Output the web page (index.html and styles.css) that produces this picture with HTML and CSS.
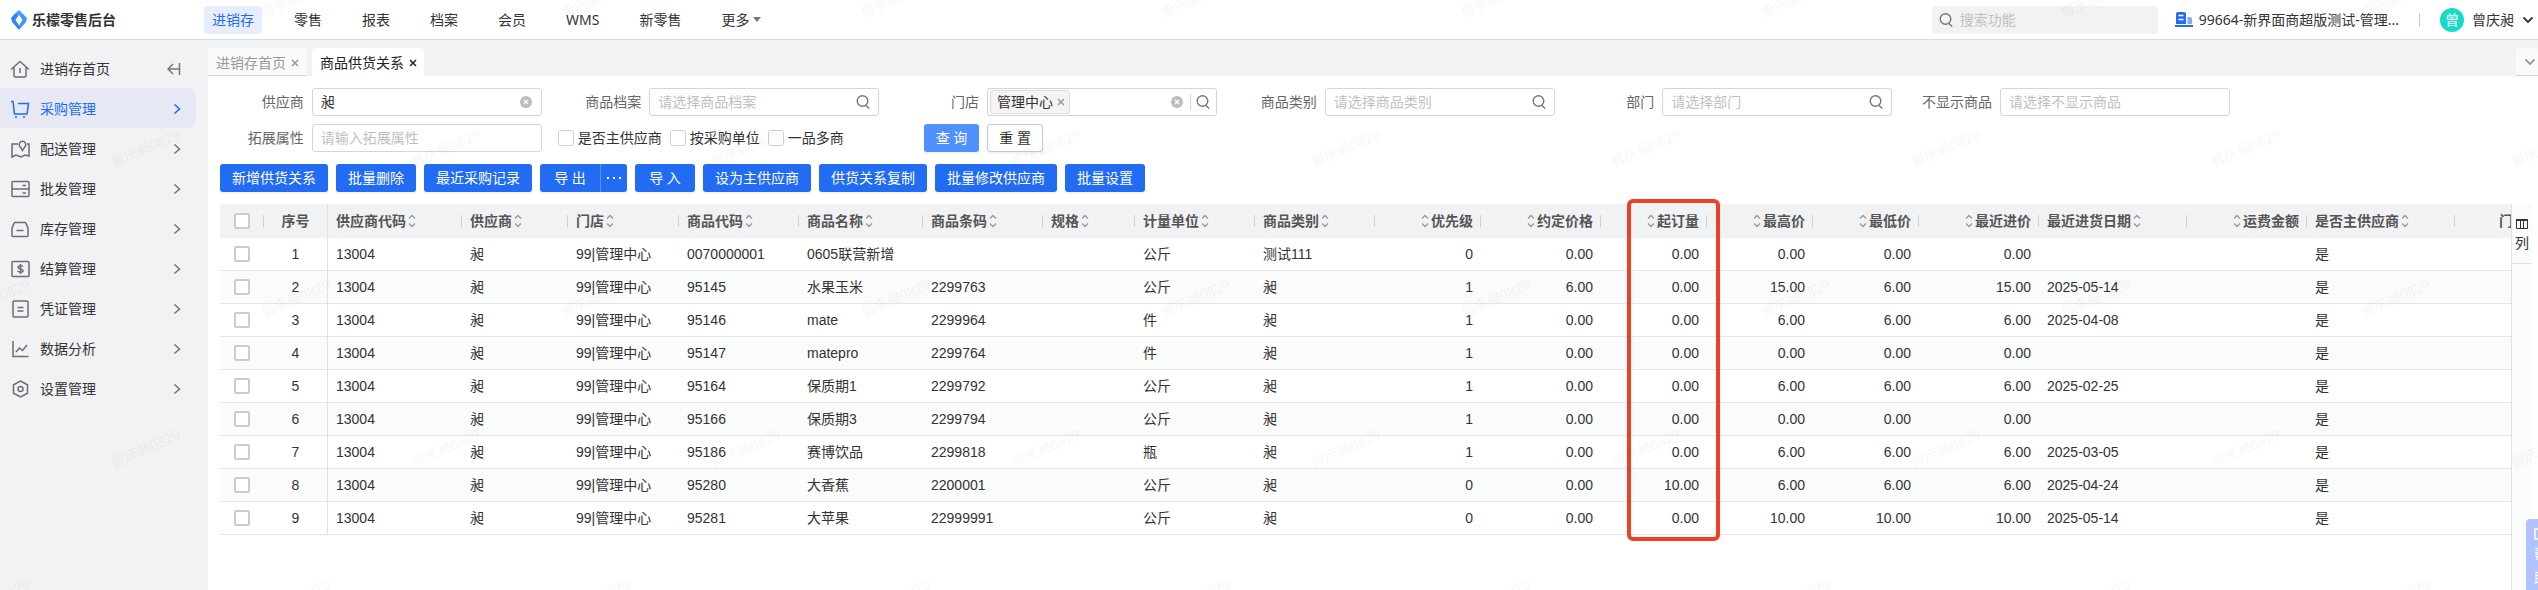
FILE: index.html
```
<!DOCTYPE html>
<html lang="zh-CN">
<head>
    <meta charset="UTF-8">
    <meta name="viewport" content="width=device-width, initial-scale=1.0">
    <title>乐檬零售后台</title>
    <link rel="stylesheet" href="styles.css">
</head>
<body>
    <!-- shared icons -->
    <svg class="sprite" width="0" height="0">
        <symbol id="sort" viewBox="0 0 8 14"><path d="M1 4.500 4 1.500l3 3M1 9.500l3 3 3-3" fill="none" stroke="#999" stroke-width="1.300"/></symbol>
        <symbol id="search" viewBox="0 0 16 16"><circle cx="7.500" cy="7" r="5.300" fill="none" stroke="#777" stroke-width="1.400"/><path d="m11 11.500 3.200 3" fill="none" stroke="#777" stroke-width="1.400"/></symbol>
        <symbol id="clear" viewBox="0 0 12 12"><circle cx="6" cy="6" r="6" fill="#bdbdbd"/><path d="m4 4 4 4m0-4-4 4" stroke="#fff" stroke-width="1.400"/></symbol>
        <symbol id="cross" viewBox="0 0 8 8"><path d="m1 1 6 6m0-6-6 6" fill="none" stroke="currentColor" stroke-width="1.500"/></symbol>
        <symbol id="right" viewBox="0 0 8 12"><path d="m1.500 1.500 5 4.500-5 4.500" fill="none" stroke="currentColor" stroke-width="1.600"/></symbol>
        <symbol id="down" viewBox="0 0 12 8"><path d="m1.500 1.500 4.500 4.500 4.500-4.500" fill="none" stroke="currentColor" stroke-width="1.800"/></symbol>
    </svg>

    <header class="header">
        <div class="logo">
            <svg width="16" height="20" viewBox="0 0 16 20">
                <path d="M8 0 3 4.500v3L8 4.500l2.500 3L13 5z" fill="#3aa0ff"/>
                <path d="M3 4.500 0 8l1 4 7 8v-4.500L4.500 10 8 4.500z" fill="#2f86f6"/>
                <path d="M13 5l3 3-1 4-7 8v-4.500l3.500-5.500L8 4.500z" fill="#3f97fb"/>
            </svg>
            <span>乐檬零售后台</span>
        </div>
        <nav class="nav">
            <a href="#" class="active">进销存</a>
            <a href="#">零售</a>
            <a href="#">报表</a>
            <a href="#">档案</a>
            <a href="#">会员</a>
            <a href="#">WMS</a>
            <a href="#">新零售</a>
            <a href="#">更多<i class="caret"></i></a>
        </nav>
        <div class="header-right">
            <label class="search-box">
                <svg width="16" height="16"><use href="#search"/></svg>
                <input type="text" placeholder="搜索功能" aria-label="搜索功能">
            </label>
            <a href="#" class="org">
                <svg width="18" height="15" viewBox="0 0 18 15">
                    <path d="M1 2a2 2 0 0 1 2-2h6a2 2 0 0 1 2 2v10H1zM0 13h18v2H0z" fill="#226cf3"/>
                    <path d="M3.500 3.500h5M3.500 7.500h5" stroke="#fff" stroke-width="1.500"/>
                    <path d="M12.500 5H15a2 2 0 0 1 2 2v5h-4.500z" fill="#7fa9f8"/>
                </svg>
                <span>99664-新界面商超版测试-管理...</span>
            </a>
            <span class="divider"></span>
            <button class="user">
                <span class="avatar">曾</span>
                <span>曾庆昶</span>
                <svg width="12" height="8"><use href="#down"/></svg>
            </button>
        </div>
    </header>

    <div class="layout">
        <aside class="sidebar">
            <a href="#" class="menu-item">
                <svg class="menu-icon" viewBox="0 0 20 20"><path d="M1 10.500 10 2.500l9 8M4 8.500V17a1 1 0 0 0 1 1h10a1 1 0 0 0 1-1V8.500M10 9v5"/></svg>
                <span>进销存首页</span>
                <svg class="collapse" width="14" height="12" viewBox="0 0 14 12"><path d="M6 1 1 6l5 5M1 6h11M12.500 0v12" fill="none" stroke="#777" stroke-width="1.500"/></svg>
            </a>
            <a href="#" class="menu-item active">
                <svg class="menu-icon" viewBox="0 0 20 20"><path d="M1 2.500h2L4.500 15H17l1.500-10.500H8"/><path d="M6 17v2M14 17v2"/></svg>
                <span>采购管理</span>
                <svg class="arrow"><use href="#right"/></svg>
            </a>
            <a href="#" class="menu-item">
                <svg class="menu-icon" viewBox="0 0 20 20"><path d="M8 5H2v13l4-2 5 2 4-2 4 1V5h-2"/><path d="M12.500 11.500 9.500 7a3.300 3.300 0 1 1 6 0z"/></svg>
                <span>配送管理</span>
                <svg class="arrow"><use href="#right"/></svg>
            </a>
            <a href="#" class="menu-item">
                <svg class="menu-icon" viewBox="0 0 20 20"><rect x="2" y="2.500" width="17" height="15" rx="1"/><path d="M2 10h17M12.500 6.500H16M12.500 14H16"/></svg>
                <span>批发管理</span>
                <svg class="arrow"><use href="#right"/></svg>
            </a>
            <a href="#" class="menu-item">
                <svg class="menu-icon" viewBox="0 0 20 20"><path d="M4.500 3.500h11L18 9v7.500a1 1 0 0 1-1 1H3a1 1 0 0 1-1-1V9zM6.500 11.500h7"/></svg>
                <span>库存管理</span>
                <svg class="arrow"><use href="#right"/></svg>
            </a>
            <a href="#" class="menu-item">
                <svg class="menu-icon" viewBox="0 0 20 20"><rect x="2" y="2.500" width="17" height="15" rx="1"/><path d="M13 7.500c-1-1-5-1.500-5 .8s5 1.200 5 3.400-4 1.800-5.500.3M10.500 5v10"/></svg>
                <span>结算管理</span>
                <svg class="arrow"><use href="#right"/></svg>
            </a>
            <a href="#" class="menu-item">
                <svg class="menu-icon" viewBox="0 0 20 20"><rect x="3" y="2" width="15" height="16" rx="1"/><path d="M7.500 8.500h6M7.500 12h6"/></svg>
                <span>凭证管理</span>
                <svg class="arrow"><use href="#right"/></svg>
            </a>
            <a href="#" class="menu-item">
                <svg class="menu-icon" viewBox="0 0 20 20"><path d="M3 2v15.500h15.500M6 13l3.500-4 3 2.500L17 6"/></svg>
                <span>数据分析</span>
                <svg class="arrow"><use href="#right"/></svg>
            </a>
            <a href="#" class="menu-item">
                <svg class="menu-icon" viewBox="0 0 20 20"><path d="m10.500 2 7 3.800v8.400l-7 3.800-7-3.800V5.800z"/><circle cx="10.500" cy="10" r="2.500"/></svg>
                <span>设置管理</span>
                <svg class="arrow"><use href="#right"/></svg>
            </a>
        </aside>

        <main class="main">
            <div class="tabs">
                <button class="tab">进销存首页<svg width="8" height="8"><use href="#cross"/></svg></button>
                <button class="tab active">商品供货关系<svg width="8" height="8"><use href="#cross"/></svg></button>
                <button class="tab tab-more" aria-label="更多标签"><svg width="12" height="8"><use href="#down"/></svg></button>
            </div>

            <section class="panel">
                <!-- filters -->
                <form class="filters">
                    <div class="field">
                        <label for="supplier">供应商</label>
                        <div class="input">
                            <input type="text" id="supplier" value="昶">
                            <svg class="clear" width="12" height="12"><use href="#clear"/></svg>
                        </div>
                    </div>
                    <div class="field">
                        <label for="goods">商品档案</label>
                        <div class="input">
                            <input type="text" id="goods" placeholder="请选择商品档案">
                            <svg width="16" height="16"><use href="#search"/></svg>
                        </div>
                    </div>
                    <div class="field">
                        <label for="store">门店</label>
                        <div class="input with-tag">
                            <span class="tag">管理中心<svg width="8" height="8"><use href="#cross"/></svg></span>
                            <input type="text" id="store">
                            <svg width="12" height="12"><use href="#clear"/></svg>
                            <span class="line"></span>
                            <svg width="16" height="16"><use href="#search"/></svg>
                        </div>
                    </div>
                    <div class="field">
                        <label for="category">商品类别</label>
                        <div class="input">
                            <input type="text" id="category" placeholder="请选择商品类别">
                            <svg width="16" height="16"><use href="#search"/></svg>
                        </div>
                    </div>
                    <div class="field">
                        <label for="dept">部门</label>
                        <div class="input">
                            <input type="text" id="dept" placeholder="请选择部门">
                            <svg width="16" height="16"><use href="#search"/></svg>
                        </div>
                    </div>
                    <div class="field">
                        <label for="hidden-goods">不显示商品</label>
                        <div class="input">
                            <input type="text" id="hidden-goods" placeholder="请选择不显示商品">
                        </div>
                    </div>
                    <div class="field">
                        <label for="ext">拓展属性</label>
                        <div class="input">
                            <input type="text" id="ext" placeholder="请输入拓展属性">
                        </div>
                    </div>
                    <div class="checks">
                        <label><input type="checkbox">是否主供应商</label>
                        <label><input type="checkbox">按采购单位</label>
                        <label><input type="checkbox">一品多商</label>
                        <div class="form-actions">
                            <button type="button" class="btn btn-light">查 询</button>
                            <button type="button" class="btn btn-default">重 置</button>
                        </div>
                    </div>
                </form>

                <!-- actions -->
                <div class="toolbar">
                    <button class="btn">新增供货关系</button>
                    <button class="btn">批量删除</button>
                    <button class="btn">最近采购记录</button>
                    <div class="btn-group">
                        <button class="btn">导 出</button>
                        <button class="btn btn-more" aria-label="更多"><i></i><i></i><i></i></button>
                    </div>
                    <button class="btn">导 入</button>
                    <button class="btn">设为主供应商</button>
                    <button class="btn">供货关系复制</button>
                    <button class="btn">批量修改供应商</button>
                    <button class="btn">批量设置</button>
                </div>

                <!-- grid -->
                <div class="grid">
                    <div class="grid-body">
                        <table>
                            <colgroup>
                                <col class="w44"><col class="w64"><col class="w134"><col class="w106"><col class="w111">
                                <col class="w120"><col class="w124"><col class="w120"><col class="w92"><col class="w120">
                                <col class="w120"><col class="w106"><col class="w120"><col class="w106"><col class="w106">
                                <col class="w106"><col class="w120"><col class="w148"><col class="w120"><col class="w148">
                                <col class="w80">
                            </colgroup>
                            <thead>
                                <tr>
                                    <th><input type="checkbox" aria-label="全选"></th>
                                    <th>序号</th>
                                    <th>供应商代码<svg><use href="#sort"/></svg></th>
                                    <th>供应商<svg><use href="#sort"/></svg></th>
                                    <th>门店<svg><use href="#sort"/></svg></th>
                                    <th>商品代码<svg><use href="#sort"/></svg></th>
                                    <th>商品名称<svg><use href="#sort"/></svg></th>
                                    <th>商品条码<svg><use href="#sort"/></svg></th>
                                    <th>规格<svg><use href="#sort"/></svg></th>
                                    <th>计量单位<svg><use href="#sort"/></svg></th>
                                    <th>商品类别<svg><use href="#sort"/></svg></th>
                                    <th class="num"><svg><use href="#sort"/></svg>优先级</th>
                                    <th class="num"><svg><use href="#sort"/></svg>约定价格</th>
                                    <th class="num"><svg><use href="#sort"/></svg>起订量</th>
                                    <th class="num"><svg><use href="#sort"/></svg>最高价</th>
                                    <th class="num"><svg><use href="#sort"/></svg>最低价</th>
                                    <th class="num"><svg><use href="#sort"/></svg>最近进价</th>
                                    <th>最近进货日期<svg><use href="#sort"/></svg></th>
                                    <th class="num"><svg><use href="#sort"/></svg>运费金额</th>
                                    <th>是否主供应商<svg><use href="#sort"/></svg></th>
                                    <th class="num">门店</th>
                                </tr>
                            </thead>
                            <tbody>
                                <tr><td><input type="checkbox" aria-label="选择第1行"></td><td>1</td><td>13004</td><td>昶</td><td>99|管理中心</td><td>0070000001</td><td>0605联营新增</td><td></td><td></td><td>公斤</td><td>测试111</td><td class="num">0</td><td class="num">0.00</td><td class="num">0.00</td><td class="num">0.00</td><td class="num">0.00</td><td class="num">0.00</td><td></td><td></td><td>是</td><td></td></tr>
                                <tr><td><input type="checkbox" aria-label="选择第2行"></td><td>2</td><td>13004</td><td>昶</td><td>99|管理中心</td><td>95145</td><td>水果玉米</td><td>2299763</td><td></td><td>公斤</td><td>昶</td><td class="num">1</td><td class="num">6.00</td><td class="num">0.00</td><td class="num">15.00</td><td class="num">6.00</td><td class="num">15.00</td><td>2025-05-14</td><td></td><td>是</td><td></td></tr>
                                <tr><td><input type="checkbox" aria-label="选择第3行"></td><td>3</td><td>13004</td><td>昶</td><td>99|管理中心</td><td>95146</td><td>mate</td><td>2299964</td><td></td><td>件</td><td>昶</td><td class="num">1</td><td class="num">0.00</td><td class="num">0.00</td><td class="num">6.00</td><td class="num">6.00</td><td class="num">6.00</td><td>2025-04-08</td><td></td><td>是</td><td></td></tr>
                                <tr><td><input type="checkbox" aria-label="选择第4行"></td><td>4</td><td>13004</td><td>昶</td><td>99|管理中心</td><td>95147</td><td>matepro</td><td>2299764</td><td></td><td>件</td><td>昶</td><td class="num">1</td><td class="num">0.00</td><td class="num">0.00</td><td class="num">0.00</td><td class="num">0.00</td><td class="num">0.00</td><td></td><td></td><td>是</td><td></td></tr>
                                <tr><td><input type="checkbox" aria-label="选择第5行"></td><td>5</td><td>13004</td><td>昶</td><td>99|管理中心</td><td>95164</td><td>保质期1</td><td>2299792</td><td></td><td>公斤</td><td>昶</td><td class="num">1</td><td class="num">0.00</td><td class="num">0.00</td><td class="num">6.00</td><td class="num">6.00</td><td class="num">6.00</td><td>2025-02-25</td><td></td><td>是</td><td></td></tr>
                                <tr><td><input type="checkbox" aria-label="选择第6行"></td><td>6</td><td>13004</td><td>昶</td><td>99|管理中心</td><td>95166</td><td>保质期3</td><td>2299794</td><td></td><td>公斤</td><td>昶</td><td class="num">1</td><td class="num">0.00</td><td class="num">0.00</td><td class="num">0.00</td><td class="num">0.00</td><td class="num">0.00</td><td></td><td></td><td>是</td><td></td></tr>
                                <tr><td><input type="checkbox" aria-label="选择第7行"></td><td>7</td><td>13004</td><td>昶</td><td>99|管理中心</td><td>95186</td><td>赛博饮品</td><td>2299818</td><td></td><td>瓶</td><td>昶</td><td class="num">1</td><td class="num">0.00</td><td class="num">0.00</td><td class="num">6.00</td><td class="num">6.00</td><td class="num">6.00</td><td>2025-03-05</td><td></td><td>是</td><td></td></tr>
                                <tr><td><input type="checkbox" aria-label="选择第8行"></td><td>8</td><td>13004</td><td>昶</td><td>99|管理中心</td><td>95280</td><td>大香蕉</td><td>2200001</td><td></td><td>公斤</td><td>昶</td><td class="num">0</td><td class="num">0.00</td><td class="num">10.00</td><td class="num">6.00</td><td class="num">6.00</td><td class="num">6.00</td><td>2025-04-24</td><td></td><td>是</td><td></td></tr>
                                <tr><td><input type="checkbox" aria-label="选择第9行"></td><td>9</td><td>13004</td><td>昶</td><td>99|管理中心</td><td>95281</td><td>大苹果</td><td>22999991</td><td></td><td>公斤</td><td>昶</td><td class="num">0</td><td class="num">0.00</td><td class="num">0.00</td><td class="num">10.00</td><td class="num">10.00</td><td class="num">10.00</td><td>2025-05-14</td><td></td><td>是</td><td></td></tr>
                            </tbody>
                        </table>
                    </div>
                    <div class="side-bar">
                        <button>
                            <svg width="12" height="10" viewBox="0 0 12 10"><path d="M0 0h12v2H0z" fill="#333"/><path d="M.5.5h11v9H.5zM4.500 2v7M7.500 2v7" fill="none" stroke="#333"/></svg>
                            列
                        </button>
                    </div>
                    <div class="highlight"></div>
                </div>
            </section>
        </main>
    </div>

    <button class="help">
        <svg width="14" height="12" viewBox="0 0 14 12"><rect x="1" y="1" width="12" height="10" fill="none" stroke="#fff" stroke-width="1.500"/></svg>
        <span>帮</span>
        <span>助</span>
    </button>

    <!-- watermark -->
    <svg class="watermark" width="100%" height="100%" aria-hidden="true">
        <pattern id="wm" width="300" height="300" patternUnits="userSpaceOnUse">
            <text x="114" y="168" transform="rotate(-24 114 168)">曾庆昶0829</text>
            <text x="264" y="18" transform="rotate(-24 264 18)">曾庆昶0829</text>
            <text x="264" y="318" transform="rotate(-24 264 318)">曾庆昶0829</text>
            <text x="-36" y="18" transform="rotate(-24 -36 18)">曾庆昶0829</text>
            <text x="-36" y="318" transform="rotate(-24 -36 318)">曾庆昶0829</text>
        </pattern>
        <rect width="100%" height="100%" fill="url(#wm)"/>
    </svg>
</body>
</html>
```
FILE: styles.css
```
/* Global Styles */
* {
    margin: 0;
    padding: 0;
    box-sizing: border-box;
}

body {
    font-family: 'Noto Sans', 'Noto Sans CJK SC', sans-serif;
    font-size: 14px;
    line-height: 20px;
    color: #333;
    background-color: #f1f2f4;
    min-height: 100vh;
    display: flex;
    flex-direction: column;
    overflow-x: hidden;
}

a {
    color: inherit;
    text-decoration: none;
}

button,
input {
    font: inherit;
    color: inherit;
    border: none;
    background: none;
    outline: none;
}

button {
    cursor: pointer;
    white-space: nowrap;
}

input::placeholder {
    color: #bfbfbf;
    opacity: 1;
}

input[type="checkbox"] {
    appearance: none;
    width: 16px;
    height: 16px;
    border: 1px solid #d0d0d0;
    border-radius: 3px;
    background-color: #fff;
}

svg {
    flex: none;
}

.sprite {
    position: absolute;
}

/* Header */
.header {
    display: flex;
    align-items: center;
    height: 40px;
    background-color: #fff;
    border-bottom: 1px solid #d9dadc;
}

.logo {
    display: flex;
    align-items: center;
    gap: 5px;
    width: 204px;
    padding-left: 11px;
    font-weight: bold;
}

.nav {
    display: flex;
    gap: 24px;
}

.nav a {
    display: flex;
    align-items: center;
    height: 28px;
    padding: 0 8px;
    border-radius: 4px;
}

.nav a.active {
    color: #226cf3;
    background-color: #e7edfb;
}

.caret {
    margin-left: 4px;
    border: 4px solid transparent;
    border-top: 5px solid #777;
    border-bottom: none;
}

.header-right {
    display: flex;
    align-items: center;
    margin-left: auto;
    padding-right: 4px;
}

.search-box {
    display: flex;
    align-items: center;
    gap: 6px;
    width: 226px;
    height: 28px;
    padding: 0 6px;
    margin-right: 17px;
    border-radius: 4px;
    background-color: #f1f2f4;
}

.search-box input {
    flex: 1;
    min-width: 0;
}

.org {
    display: flex;
    align-items: center;
    gap: 6px;
}

.divider {
    width: 1px;
    height: 14px;
    margin: 0 20px;
    background-color: #ccc;
}

.user {
    display: flex;
    align-items: center;
    gap: 8px;
}

.avatar {
    width: 24px;
    height: 24px;
    line-height: 24px;
    border-radius: 50%;
    color: #fff;
    background-color: #13dcc9;
}

/* Layout */
.layout {
    flex: 1;
    display: flex;
}

.sidebar {
    width: 208px;
    flex: none;
    padding: 8px 12px 0 0;
}

.menu-item {
    display: flex;
    align-items: center;
    gap: 10px;
    height: 40px;
    padding: 2px 15px 0 10px;
    border-radius: 0 8px 8px 0;
}

.menu-item.active {
    color: #226cf3;
    background-color: #e6e9f3;
}

.menu-item span {
    flex: 1;
}

.menu-icon {
    width: 20px;
    height: 20px;
    fill: none;
    stroke: #6b6d78;
    stroke-width: 1.5;
}

.active .menu-icon {
    stroke: #226cf3;
}

.arrow {
    width: 8px;
    height: 12px;
    color: #777;
}

.active .arrow {
    color: #226cf3;
}

.main {
    flex: 1;
    min-width: 0;
    display: flex;
    flex-direction: column;
}

/* Tabs */
.tabs {
    display: flex;
    gap: 6px;
    padding-top: 8px;
}

.tab {
    display: flex;
    align-items: center;
    gap: 5px;
    height: 28px;
    padding: 2px 7px 0 8px;
    color: #999;
    background-color: #fafafa;
    border-bottom: 1px solid #d4d4d4;
    border-radius: 4px 4px 0 0;
}

.tab.active {
    color: #222;
    background-color: #fff;
    border-bottom-color: #fff;
}

.tab-more {
    margin-left: auto;
    padding: 0 2px 0 8px;
}

/* Filters */
.panel {
    flex: 1;
    display: flex;
    flex-direction: column;
    gap: 12px;
    padding-top: 12px;
    background-color: #fff;
}

.filters {
    display: grid;
    grid-template-columns: repeat(6, 1fr);
    gap: 8px 4px;
    max-width: 2022px;
}

.field {
    display: flex;
    align-items: center;
    gap: 8px;
}

.field > label {
    flex: 1;
    text-align: right;
    color: #666;
}

.input {
    display: flex;
    align-items: center;
    width: 230px;
    height: 28px;
    padding: 0 7px 0 8px;
    border: 1px solid #d5d5d5;
    border-radius: 3px;
}

.input input {
    flex: 1;
    min-width: 0;
}

.input .clear {
    margin-right: 2px;
}

.with-tag {
    padding: 0 5px 0 2px;
}

.tag {
    display: flex;
    align-items: center;
    gap: 4px;
    height: 24px;
    padding: 0 4px 0 6px;
    border: 1px solid #ddd;
    border-radius: 3px;
    background-color: #f4f4f4;
}

.tag svg {
    color: #999;
}

.line {
    width: 1px;
    height: 16px;
    margin: 0 4px 0 7px;
    background-color: #d5d5d5;
}

.checks {
    grid-column: span 5;
    display: flex;
    align-items: center;
    gap: 8px;
    padding-left: 12px;
}

.checks label {
    display: flex;
    align-items: center;
    gap: 4px;
}

.form-actions {
    display: flex;
    gap: 8px;
    margin-left: 72px;
}

/* Buttons */
.btn {
    height: 28px;
    padding: 0 12px;
    color: #fff;
    background-color: #226cf3;
    border-radius: 3px;
    box-shadow: 0 2px 2px rgba(0, 0, 0, 0.05);
}

.btn-light {
    background-color: #4f91ff;
}

.btn-default {
    color: #333;
    background-color: #fff;
    border: 1px solid #c8c8c8;
    padding: 0 11px;
}

.toolbar {
    display: flex;
    gap: 8px;
    padding-left: 12px;
}

.toolbar .btn {
    min-width: 60px;
}

.btn-group {
    display: flex;
}

.btn-group .btn:first-child {
    border-radius: 3px 0 0 3px;
}

.toolbar .btn-more {
    display: flex;
    align-items: center;
    justify-content: center;
    gap: 4px;
    min-width: 27px;
    padding: 0;
    border-left: 1px solid #5b92f7;
    border-radius: 0 3px 3px 0;
}

.btn-more i {
    width: 2px;
    height: 2px;
    background-color: #fff;
}

/* Grid */
.grid {
    position: relative;
    flex: 1;
    display: flex;
    padding: 0 6px 0 12px;
}

.grid-body {
    flex: 1;
    min-width: 0;
    overflow: hidden;
}

table {
    width: 2315px;
    table-layout: fixed;
    border-collapse: separate;
    border-spacing: 0;
    font-family: 'Liberation Sans', 'Noto Sans CJK SC', sans-serif;
}

.w44 { width: 44px; }
.w64 { width: 64px; }
.w80 { width: 80px; }
.w92 { width: 92px; }
.w106 { width: 106px; }
.w111 { width: 111px; }
.w120 { width: 120px; }
.w124 { width: 124px; }
.w134 { width: 134px; }
.w148 { width: 148px; }

th,
td {
    padding: 0 8px;
    text-align: left;
    white-space: nowrap;
}

th {
    height: 34px;
    color: #555;
    background: linear-gradient(#d0d0d0, #d0d0d0) right center / 1px 12px no-repeat #f1f2f4;
}

td {
    height: 33px;
    border-bottom: 1px solid #e6e6e6;
}

tbody tr:nth-child(even) td {
    background-color: #fafbfb;
}

th svg {
    width: 8px;
    height: 14px;
    margin: 0 2px 2px;
    vertical-align: middle;
}

.num {
    text-align: right;
}

th:nth-child(-n+2),
td:nth-child(-n+2) {
    text-align: center;
}

th:nth-child(2),
td:nth-child(2) {
    background-image: none;
    border-right: 1px solid #e2e2e2;
}

table input[type="checkbox"] {
    display: block;
    margin: 0 auto;
    border: 2px solid #ccc;
    border-radius: 2px;
}

.side-bar {
    width: 21px;
    border-left: 1px solid #e2e2e2;
    background-color: #fafbfd;
}

.side-bar button {
    display: flex;
    flex-direction: column;
    align-items: center;
    gap: 4px;
    width: 100%;
    height: 60px;
    padding-top: 15px;
    border-bottom: 1px solid #e2e2e2;
}

/* frame round the 起订量 column */
.highlight {
    position: absolute;
    top: -5px;
    left: 1419px;
    width: 93px;
    height: 342px;
    border: 4px solid #ee4026;
    border-radius: 6px;
    pointer-events: none;
}

.help {
    position: fixed;
    right: -18px;
    bottom: 0;
    display: flex;
    flex-direction: column;
    align-items: center;
    gap: 4px;
    width: 30px;
    height: 71px;
    padding-top: 9px;
    color: #fff;
    background-color: #b0c2ff;
    border-radius: 4px 0 0 0;
}

.watermark {
    position: fixed;
    top: 0;
    left: 0;
    pointer-events: none;
}

.watermark text {
    font-size: 14px;
    fill: rgba(0, 0, 0, 0.035);
}
```
